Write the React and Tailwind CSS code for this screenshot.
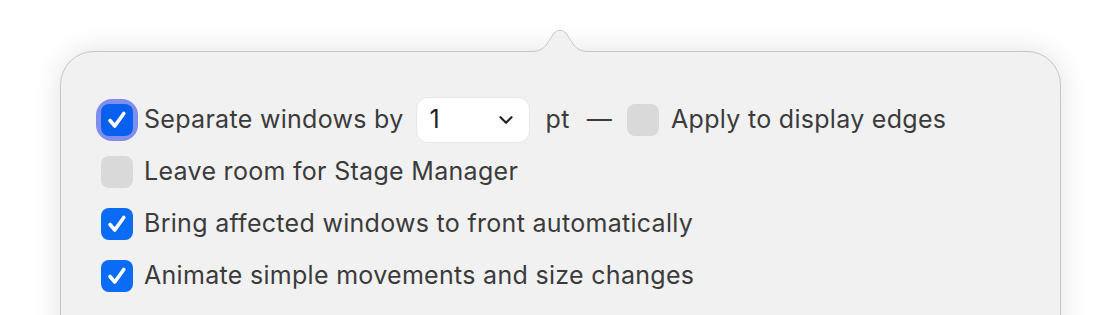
import { ChevronDown } from "lucide-react";

function Check({ checked, focused }) {
  const box = checked ? (
    <div className={`w-[32px] h-[32px] rounded-[8px] flex items-center justify-center ${focused ? "bg-[#0a60ee]" : "bg-[#0a6cf4]"}`}>
      <svg width="24" height="24" viewBox="0 0 24 24" fill="none">
        <path d="M5 12.5l4.8 5.5L18.8 5.5" stroke="white" strokeWidth="3.6" strokeLinecap="round" strokeLinejoin="round" />
      </svg>
    </div>
  ) : (
    <div className="w-[32px] h-[32px] rounded-[8px] bg-[#d9d9d9]" />
  );
  if (!focused) return box;
  return <div className="rounded-[11px] ring-[5px] ring-[#7f8eec]">{box}</div>;
}

const rows = [
  { label: "Leave room for Stage Manager", checked: false },
  { label: "Bring affected windows to front automatically", checked: true },
  { label: "Animate simple movements and size changes", checked: true },
];

export default function App() {
  return (
    <div
      className="w-[1120px] h-[315px] bg-white overflow-hidden relative text-[#3b3b3b]"
      style={{ fontFamily: "Inter, 'Noto Sans', sans-serif" }}
    >
      <div className="ml-[60px] mt-[51px] w-[1001px] h-[300px] rounded-t-[34px] border border-[#c6c6c6] bg-[#f1f1f1] shadow-[0_0_28px_rgba(0,0,0,0.12)] pt-[52px] pl-[40px]">
        <div className="flex items-center h-[32px] text-[25px] tracking-[0.3px]">
          <Check checked focused />
          <span className="ml-[11px]">Separate windows by</span>
          <div className="ml-[12px] w-[114px] h-[46px] rounded-[12px] bg-white border border-[#e6e6e6] flex items-center justify-between pl-[13px] pr-[12px] text-[#1f1f1f]">
            <span>1</span>
            <ChevronDown size={22} strokeWidth={2.4} className="text-[#222]" />
          </div>
          <span className="ml-[16px]">pt</span>
          <span className="ml-[17px]">—</span>
          <div className="ml-[15px]">
            <Check checked={false} />
          </div>
          <span className="ml-[12px]">Apply to display edges</span>
        </div>
        <div className="flex flex-col gap-[20px] mt-[20px]">
          {rows.map((r) => (
            <div key={r.label} className="flex items-center h-[32px] text-[25px] tracking-[0.3px]">
              <Check checked={r.checked} />
              <span className="ml-[11px]">{r.label}</span>
            </div>
          ))}
        </div>
      </div>
      {/* popover arrow */}
      <svg className="absolute left-[530px] top-[28px]" width="60" height="26" viewBox="0 0 60 26">
        <path d="M0 23.5 C9 23.5 12 22 17 16 L24 5 C27 1.5 33 1.5 36 5 L43 16 C48 22 51 23.5 60 23.5 L60 26 L0 26 Z" fill="#f1f1f1" />
        <path d="M0 23.5 C9 23.5 12 22 17 16 L24 5 C27 1.5 33 1.5 36 5 L43 16 C48 22 51 23.5 60 23.5" fill="none" stroke="#c6c6c6" strokeWidth="1" />
      </svg>
    </div>
  );
}
